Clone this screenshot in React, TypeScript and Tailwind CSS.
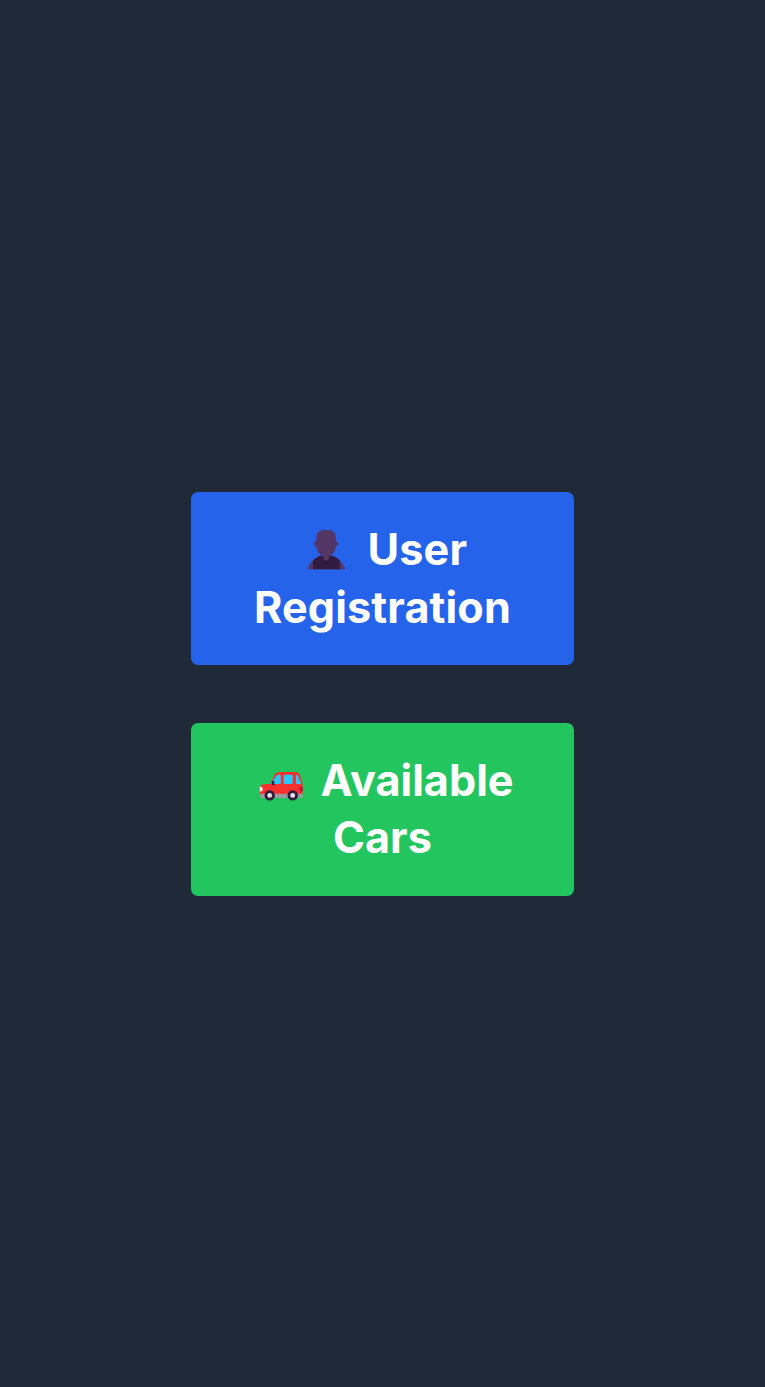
function PersonIcon() {
  return (
    <svg className="mr-[21.5px] h-[42px] w-[40px] shrink-0" viewBox="0 0 40 42" aria-hidden="true">
      <path d="M1.7 40.3C3.5 34.2 7 29.2 14 27L20.2 26l6.3 1C33 29.2 37.3 34.2 39 40.3Z" fill="#533566" />
      <path d="M7 40.3v-8.7c2.5-2.2 5-4 8-5h10.5c3.4 1 6 2.8 8.3 5v8.7Z" fill="#321b41" />
      <path d="M18 1c-4.6 0-7.5 3-7.5 7.2v3.9c-1.4.3-2.3 1.2-2.3 2.7s.9 2.5 2.3 2.6c.4 4.8 3 8.2 6.7 9.4v1.7c0 1.8 1.3 3 3 3s3-1.2 3-3v-1.7c3.7-1.2 6.2-4.6 6.6-9.4 1.4-.1 2.3-1.1 2.3-2.6s-.9-2.4-2.3-2.7V8.2c0-4.2-2.9-7.2-7.3-7.2Z" fill="#533566" />
    </svg>
  );
}

function CarIcon() {
  return (
    <svg className="mt-[13px] mr-[16.6px] h-[30px] w-[45px] shrink-0" viewBox="0 0 45 30" aria-hidden="true">
      <path d="M.7 21h43v3.5q0 1.5-1.5 1.5H2.5Q1 26 1 24.5Z" fill="#9b9b9b" />
      <path d="M16.5 1.6Q18 .1 20.5 .1h16q3.2 0 4.2 2.5L43 10q.7 1.8.7 4v7.7H.7v-4.7q0-4.5 5-5h5Z" fill="#f8312f" />
      <path d="M17.8 3.4Q18.3 2.7 19.3 2.7h1.7q.8 0 .8.8V11q0 1-1 1H11Zm6.9 0q0-.7.8-.7h7.4q.8 0 .8.8V11q0 1-1 1h-7q-1 0-1-1Zm12.2 0q0-.7.8-.7 1 0 1.4 1.3L42.2 12h-4q-1.1 0-1.3-1Z" fill="#26c9fc" />
      <path d="M12.7 10.6q0-1.8 1.8-1.8.8 0 .8.8v3.6H14q-1.3 0-1.3-1.2Z" fill="#321b41" />
      <path d="M.7 14.8H1.6q2.2 0 2.2 2.4t-2.2 2.4H.7Z" fill="#f4f4f4" />
      <path d="M43.7 14.8H42.6q-2.3 0-2.3 2.4t2.3 2.4h1.1Z" fill="#ca0b4a" />
      <circle cx="10.7" cy="23.4" r="5.2" fill="#321b41" />
      <circle cx="33.7" cy="23.4" r="5.2" fill="#321b41" />
      <circle cx="10.7" cy="23.4" r="2.4" fill="#e6e6e6" />
      <circle cx="33.7" cy="23.4" r="2.4" fill="#e6e6e6" />
    </svg>
  );
}

export default function App() {
  return (
    <main className="flex min-h-[1387px] flex-col items-center justify-center gap-[58px] bg-[#1f2937] font-['Inter',sans-serif] text-[43.2px] leading-[57.6px] font-bold text-white">
      <button className="flex h-[173px] w-[383px] flex-col rounded-[7px] bg-[#2563eb] pt-[29.6px]">
        <span className="flex h-[57.6px] w-full items-center pl-[115px] tracking-[0.12px]"><PersonIcon />User</span>
        <span className="block w-full pt-[0.4px] text-center tracking-[0.12px]">Registration</span>
      </button>
      <button className="flex h-[173px] w-[383px] flex-col rounded-[7px] bg-[#22c55e] pt-[29.6px]">
        <span className="flex h-[57.6px] w-full items-center pl-[68px]"><CarIcon />Available</span>
        <span className="-mt-px block w-full text-center">Cars</span>
      </button>
    </main>
  );
}
